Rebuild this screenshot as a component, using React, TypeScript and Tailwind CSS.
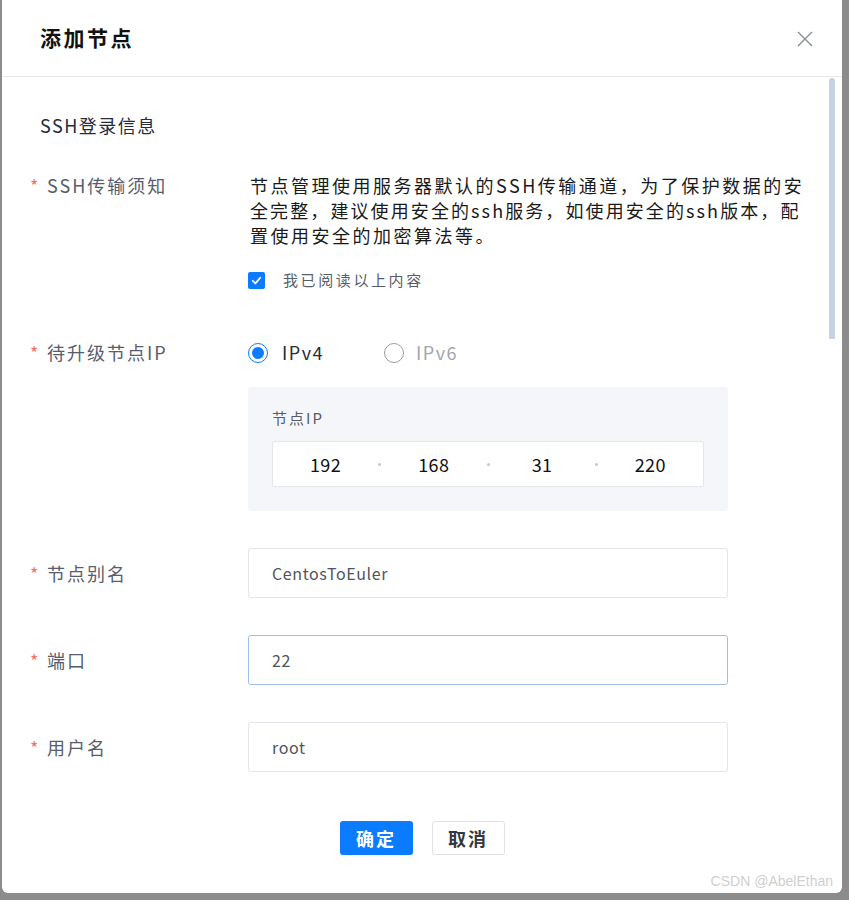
import React from "react";

const FONT = "font-['Noto_Sans_CJK_SC','Noto_Sans',sans-serif]";

function Label({ text }: { text: string }) {
  return (
    <div className="flex w-[218px] shrink-0 items-center h-[25px]">
      <span className="w-[17px] text-[18px] leading-[25px] text-[#f66f6a]">*</span>
      <span className="text-[18px] leading-[25px] tracking-[2px] text-[#575d6c]">{text}</span>
    </div>
  );
}

function TextInput({ value, focused }: { value: string; focused?: boolean }) {
  return (
    <div
      className={
        focused
          ? "w-[480px] h-[50px] border border-[#9dbdf0] rounded-[3px] bg-white flex items-center pl-[23px]"
          : "w-[480px] h-[50px] border border-[#e3e5ea] rounded-[3px] bg-white flex items-center pl-[23px]"
      }
    >
      <span className="text-[16px] tracking-[0.6px] text-[#4f5460]">{value}</span>
    </div>
  );
}

export default function App() {
  const ip = ["192", "168", "31", "220"];
  return (
    <div className={`w-[849px] h-[900px] bg-[#8c8c8c] overflow-hidden ${FONT}`}>
      <div className="ml-[2px] w-[840px] h-[893px] bg-white rounded-b-[6px] flex flex-col relative overflow-hidden">
        {/* header */}
        <div className="h-[77px] border-b border-[#e6e7ea] flex items-center justify-between pl-[38px] pr-[29px] shrink-0">
          <span className="text-[21px] font-bold tracking-[2.5px] text-[#111]">添加节点</span>
          <svg width="16" height="16" viewBox="0 0 16 16" className="mt-[1px]">
            <path d="M1 1 L15 15 M15 1 L1 15" stroke="#8a8e99" strokeWidth="1.4" fill="none" />
          </svg>
        </div>

        {/* body */}
        <div className="relative flex-1 flex flex-col pl-[28px]">
          {/* scrollbar */}
          <div className="absolute right-[7px] top-[1px] w-[6px] h-[261px] rounded-t-[3px] bg-[#c6d1e2]" />

          <div className="pt-[36px] pl-[10px] text-[18px] leading-[25px] tracking-[1.5px] text-[#252b3a]">
            SSH登录信息
          </div>

          {/* SSH notice */}
          <div className="mt-[35px] flex items-start">
            <Label text="SSH传输须知" />
            <div className="flex flex-col pl-[2px]">
              <div className="text-[18px] leading-[25px] tracking-[2.5px] text-[#1a1a1a] whitespace-nowrap">
                节点管理使用服务器默认的SSH传输通道，为了保护数据的安
              </div>
              <div className="text-[18px] leading-[25px] tracking-[2.1px] text-[#1a1a1a] whitespace-nowrap">
                全完整，建议使用安全的ssh服务，如使用安全的ssh版本，配
              </div>
              <div className="text-[18px] leading-[25px] tracking-[2.5px] text-[#1a1a1a] whitespace-nowrap">
                置使用安全的加密算法等。
              </div>
              <div className="mt-[20px] h-[25px] flex items-center -ml-[2px]">
                <span className="w-[17px] h-[17px] rounded-[2px] bg-[#0b7bff] flex items-center justify-center">
                  <svg width="11" height="11" viewBox="0 0 12 12">
                    <path d="M2 6.4 L4.8 9.2 L10 3" stroke="#fff" strokeWidth="2" fill="none" strokeLinecap="round" strokeLinejoin="round" />
                  </svg>
                </span>
                <span className="ml-[18px] text-[15px] tracking-[2.6px] text-[#575d6c]">我已阅读以上内容</span>
              </div>
            </div>
          </div>

          {/* IP */}
          <div className="mt-[47px] flex items-start">
            <Label text="待升级节点IP" />
            <div className="flex flex-col">
              <div className="h-[25px] flex items-center">
                <span className="w-[20px] h-[20px] rounded-full border-[1.5px] border-[#0b7bff] flex items-center justify-center">
                  <span className="w-[12px] h-[12px] rounded-full bg-[#0b7bff]" />
                </span>
                <span className="ml-[14px] text-[18px] tracking-[1.5px] text-[#252b3a]">IPv4</span>
                <span className="ml-[60px] w-[20px] h-[20px] rounded-full border border-[#9a9da6] bg-white" />
                <span className="ml-[12px] text-[18px] tracking-[1.5px] text-[#a3a6ae]">IPv6</span>
              </div>
              <div className="mt-[22px] w-[480px] bg-[#f5f6fa] rounded-[3px] pt-[20px] pb-[24px] px-[24px]">
                <div className="text-[15px] leading-[22px] tracking-[2px] text-[#575d6c]">节点IP</div>
                <div className="mt-[12px] h-[46px] bg-white border border-[#e3e5ea] rounded-[2px] flex items-center">
                  {ip.map((n, i) => (
                    <React.Fragment key={n}>
                      <div className="flex-1 flex justify-center text-[18px] tracking-[0.5px] text-[#111]">{n}</div>
                      {i < 3 && <span className="w-[3px] h-[3px] rounded-full bg-[#c4c6cc]" />}
                    </React.Fragment>
                  ))}
                </div>
              </div>
            </div>
          </div>

          {/* alias */}
          <div className="mt-[37px] flex items-center">
            <Label text="节点别名" />
            <TextInput value="CentosToEuler" />
          </div>
          <div className="mt-[37px] flex items-center">
            <Label text="端口" />
            <TextInput value="22" focused />
          </div>
          <div className="mt-[37px] flex items-center">
            <Label text="用户名" />
            <TextInput value="root" />
          </div>

          {/* buttons */}
          <div className="mt-[49px] -ml-[28px] flex justify-center gap-[19px]">
            <button className="w-[73px] h-[34px] rounded-[3px] bg-[#0b7bff] text-white text-[18px] font-bold tracking-[2px] flex items-center justify-center">
              确定
            </button>
            <button className="w-[73px] h-[34px] rounded-[3px] bg-white border border-[#dfe1e6] text-[#333740] text-[18px] font-bold tracking-[2px] flex items-center justify-center">
              取消
            </button>
          </div>
        </div>

        {/* watermark */}
        <div className="absolute right-[9px] bottom-[1px] text-[14px] text-[#cfcfcf] font-['Liberation_Sans',sans-serif]">
          CSDN @AbelEthan
        </div>
      </div>
    </div>
  );
}
